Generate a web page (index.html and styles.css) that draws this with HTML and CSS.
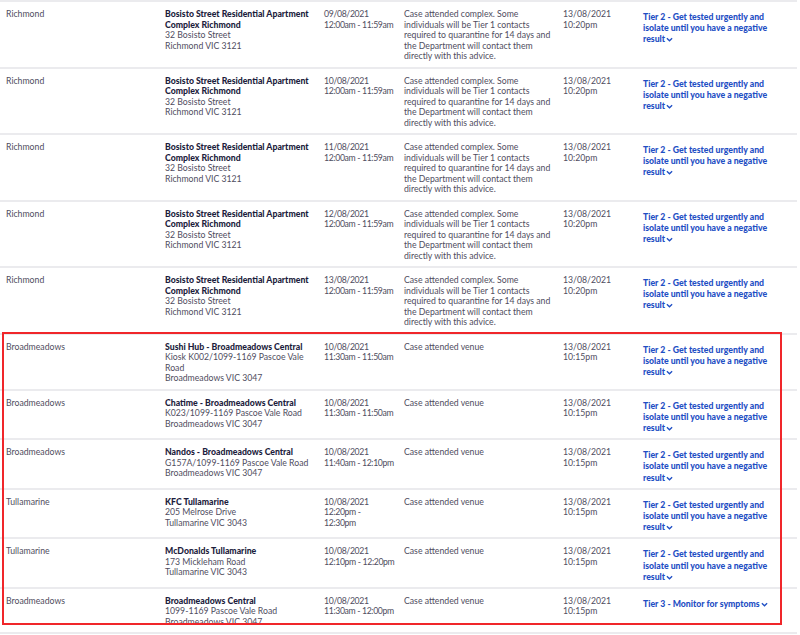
FILE: index.html
```html
<!DOCTYPE html>
<html>
<head>
<meta charset="utf-8">
<link rel="stylesheet" href="styles.css">
</head>
<body>
<div class="table">
  <div class="row">
    <div class="cell">Richmond</div>
    <div class="cell"><span class="title">Bosisto Street Residential Apartment Complex Richmond</span><br>32 Bosisto Street<br>Richmond VIC 3121</div>
    <div class="cell time">09/08/2021<br>12:00am - 11:59am</div>
    <div class="cell">Case attended complex. Some individuals will be Tier 1 contacts required to quarantine for 14 days and the Department will contact them directly with this advice.</div>
    <div class="cell">13/08/2021<br>10:20pm</div>
    <div class="cell tier">Tier 2 - Get tested urgently and isolate until you have a negative result<svg class="chev" viewBox="0 0 8 5"><path d="M1 1l3 3 3-3"/></svg></div>
  </div>
  <div class="row">
    <div class="cell">Richmond</div>
    <div class="cell"><span class="title">Bosisto Street Residential Apartment Complex Richmond</span><br>32 Bosisto Street<br>Richmond VIC 3121</div>
    <div class="cell time">10/08/2021<br>12:00am - 11:59am</div>
    <div class="cell">Case attended complex. Some individuals will be Tier 1 contacts required to quarantine for 14 days and the Department will contact them directly with this advice.</div>
    <div class="cell">13/08/2021<br>10:20pm</div>
    <div class="cell tier">Tier 2 - Get tested urgently and isolate until you have a negative result<svg class="chev" viewBox="0 0 8 5"><path d="M1 1l3 3 3-3"/></svg></div>
  </div>
  <div class="row">
    <div class="cell">Richmond</div>
    <div class="cell"><span class="title">Bosisto Street Residential Apartment Complex Richmond</span><br>32 Bosisto Street<br>Richmond VIC 3121</div>
    <div class="cell time">11/08/2021<br>12:00am - 11:59am</div>
    <div class="cell">Case attended complex. Some individuals will be Tier 1 contacts required to quarantine for 14 days and the Department will contact them directly with this advice.</div>
    <div class="cell">13/08/2021<br>10:20pm</div>
    <div class="cell tier">Tier 2 - Get tested urgently and isolate until you have a negative result<svg class="chev" viewBox="0 0 8 5"><path d="M1 1l3 3 3-3"/></svg></div>
  </div>
  <div class="row">
    <div class="cell">Richmond</div>
    <div class="cell"><span class="title">Bosisto Street Residential Apartment Complex Richmond</span><br>32 Bosisto Street<br>Richmond VIC 3121</div>
    <div class="cell time">12/08/2021<br>12:00am - 11:59am</div>
    <div class="cell">Case attended complex. Some individuals will be Tier 1 contacts required to quarantine for 14 days and the Department will contact them directly with this advice.</div>
    <div class="cell">13/08/2021<br>10:20pm</div>
    <div class="cell tier">Tier 2 - Get tested urgently and isolate until you have a negative result<svg class="chev" viewBox="0 0 8 5"><path d="M1 1l3 3 3-3"/></svg></div>
  </div>
  <div class="row">
    <div class="cell">Richmond</div>
    <div class="cell"><span class="title">Bosisto Street Residential Apartment Complex Richmond</span><br>32 Bosisto Street<br>Richmond VIC 3121</div>
    <div class="cell time">13/08/2021<br>12:00am - 11:59am</div>
    <div class="cell">Case attended complex. Some individuals will be Tier 1 contacts required to quarantine for 14 days and the Department will contact them directly with this advice.</div>
    <div class="cell">13/08/2021<br>10:20pm</div>
    <div class="cell tier">Tier 2 - Get tested urgently and isolate until you have a negative result<svg class="chev" viewBox="0 0 8 5"><path d="M1 1l3 3 3-3"/></svg></div>
  </div>
  <div class="group">
    <div class="row">
      <div class="cell">Broadmeadows</div>
      <div class="cell"><span class="title">Sushi Hub - Broadmeadows Central</span><br>Kiosk K002/1099-1169 Pascoe Vale Road<br>Broadmeadows VIC 3047</div>
      <div class="cell time">10/08/2021<br>11:30am - 11:50am</div>
      <div class="cell">Case attended venue</div>
      <div class="cell">13/08/2021<br>10:15pm</div>
      <div class="cell tier">Tier 2 - Get tested urgently and isolate until you have a negative result<svg class="chev" viewBox="0 0 8 5"><path d="M1 1l3 3 3-3"/></svg></div>
    </div>
    <div class="row">
      <div class="cell">Broadmeadows</div>
      <div class="cell"><span class="title">Chatime - Broadmeadows Central</span><br>K023/1099-1169 Pascoe Vale Road<br>Broadmeadows VIC 3047</div>
      <div class="cell time">10/08/2021<br>11:30am - 11:50am</div>
      <div class="cell">Case attended venue</div>
      <div class="cell">13/08/2021<br>10:15pm</div>
      <div class="cell tier">Tier 2 - Get tested urgently and isolate until you have a negative result<svg class="chev" viewBox="0 0 8 5"><path d="M1 1l3 3 3-3"/></svg></div>
    </div>
    <div class="row">
      <div class="cell">Broadmeadows</div>
      <div class="cell"><span class="title">Nandos - Broadmeadows Central</span><br>G157A/1099-1169 Pascoe Vale Road<br>Broadmeadows VIC 3047</div>
      <div class="cell time">10/08/2021<br>11:40am - 12:10pm</div>
      <div class="cell">Case attended venue</div>
      <div class="cell">13/08/2021<br>10:15pm</div>
      <div class="cell tier">Tier 2 - Get tested urgently and isolate until you have a negative result<svg class="chev" viewBox="0 0 8 5"><path d="M1 1l3 3 3-3"/></svg></div>
    </div>
    <div class="row">
      <div class="cell">Tullamarine</div>
      <div class="cell"><span class="title">KFC Tullamarine</span><br>205 Melrose Drive<br>Tullamarine VIC 3043</div>
      <div class="cell time">10/08/2021<br>12:20pm -<br>12:30pm</div>
      <div class="cell">Case attended venue</div>
      <div class="cell">13/08/2021<br>10:15pm</div>
      <div class="cell tier">Tier 2 - Get tested urgently and isolate until you have a negative result<svg class="chev" viewBox="0 0 8 5"><path d="M1 1l3 3 3-3"/></svg></div>
    </div>
    <div class="row">
      <div class="cell">Tullamarine</div>
      <div class="cell"><span class="title">McDonalds Tullamarine</span><br>173 Mickleham Road<br>Tullamarine VIC 3043</div>
      <div class="cell time">10/08/2021<br>12:10pm - 12:20pm</div>
      <div class="cell">Case attended venue</div>
      <div class="cell">13/08/2021<br>10:15pm</div>
      <div class="cell tier">Tier 2 - Get tested urgently and isolate until you have a negative result<svg class="chev" viewBox="0 0 8 5"><path d="M1 1l3 3 3-3"/></svg></div>
    </div>
    <div class="row">
      <div class="cell">Broadmeadows</div>
      <div class="cell"><span class="title">Broadmeadows Central</span><br>1099-1169 Pascoe Vale Road<br>Broadmeadows VIC 3047</div>
      <div class="cell time">10/08/2021<br>11:30am - 12:00pm</div>
      <div class="cell">Case attended venue</div>
      <div class="cell">13/08/2021<br>10:15pm</div>
      <div class="cell tier">Tier 3 - Monitor for symptoms<svg class="chev" viewBox="0 0 8 5"><path d="M1 1l3 3 3-3"/></svg></div>
    </div>
    <div class="highlight"></div>
  </div>
  <div class="row end"></div>
</div>
</body>
</html>
```

FILE: styles.css
```css
html, body {
  margin: 0;
  padding: 0;
  background: #ffffff;
}
body {
  font-family: "Lato", "Liberation Sans", sans-serif;
  font-size: 8.7px;
  color: #4f4d60;
  overflow: hidden;
}
.table {
  width: 797px;
}
.row {
  display: grid;
  grid-template-columns: 159px 159px 80px 159px 80px 160px;
  border-top: 2px solid #ebebee;
  padding: 7px 0 5px;
  line-height: 10.5px;
}
.row.end {
  padding: 0;
}
.cell {
  padding-left: 6px;
  padding-right: 4px;
}
.time {
  white-space: nowrap;
  padding-right: 0;
  letter-spacing: -0.35px;
}
.title {
  font-weight: 900;
  color: #1d1d3d;
}
.tier {
  color: #1f4fc4;
  font-weight: 900;
  line-height: 11.2px;
  padding-top: 2px;
  padding-right: 22px;
}
.chev {
  width: 7px;
  height: 5px;
  margin-left: 1px;
  vertical-align: 0;
}
.chev path {
  fill: none;
  stroke: #1f4fc4;
  stroke-width: 1.5;
}
.group {
  position: relative;
}
.highlight {
  position: absolute;
  left: 2px;
  top: -1px;
  width: 776px;
  height: 289px;
  border: 2px solid #f0262a;
  pointer-events: none;
}
```
